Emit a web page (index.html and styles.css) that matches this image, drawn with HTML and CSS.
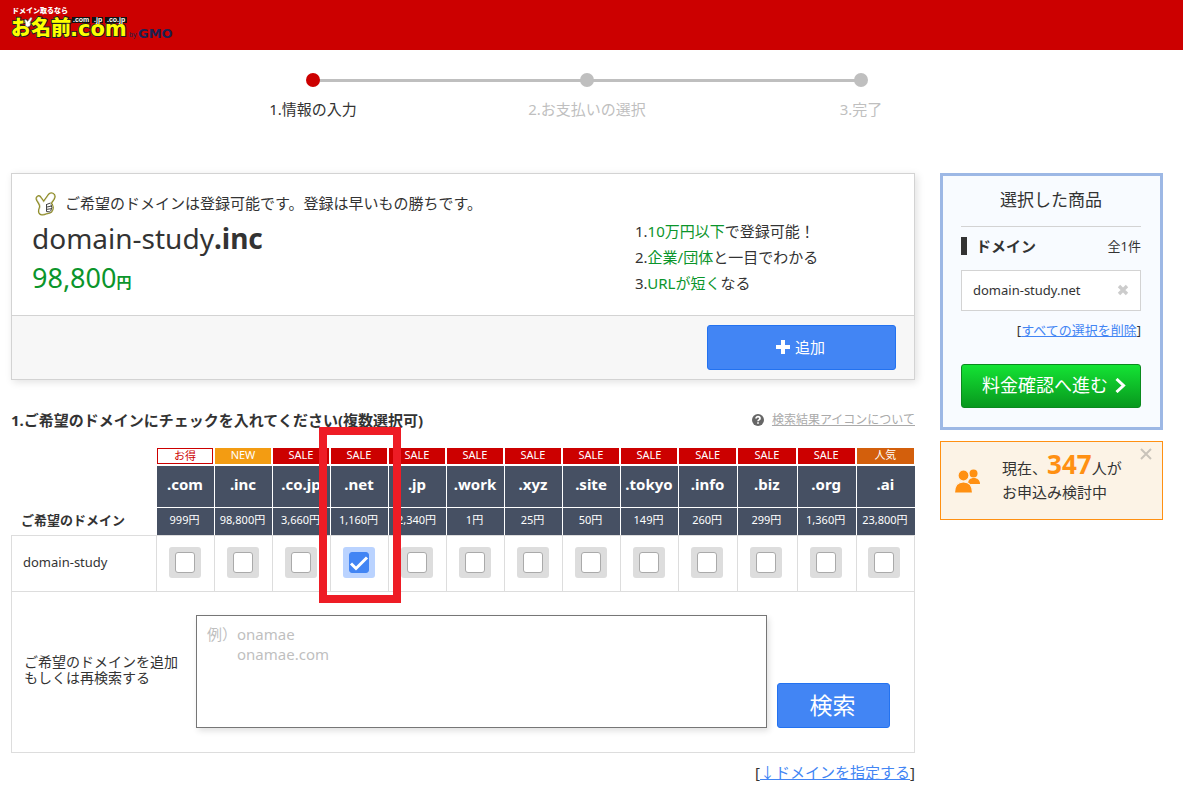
FILE: index.html
```html
<!DOCTYPE html>
<html lang="ja">
<head>
<meta charset="utf-8">
<meta name="viewport" content="width=device-width, initial-scale=1">
<title>お名前.com</title>
<link rel="stylesheet" href="styles.css">
</head>
<body>
<header class="site-header">
  <a class="logo" href="#" aria-label="お名前.com by GMO">
    <svg width="176" height="42" viewBox="0 0 176 42">
      <text class="logo-tag" x="12" y="13">ドメイン取るなら</text>
      <text class="logo-kanji" x="11" y="35">お名前</text>
      <text class="logo-com" x="70" y="36">.com</text>
      <path d="M72 17h18v6H72zM92 17h11v6H92zM105 17h22v6h-22z" fill="#111"/>
      <g class="logo-tld"><text x="73" y="22">.com</text><text x="94" y="22">.jp</text><text x="107" y="22">.co.jp</text></g>
      <path d="M24.500 20q1.500-1.500 3 1.500l3-4q2-.5 1.500 1.500L30 22.500q1.500 4-2.500 4.500-3-.5-2-4z" fill="#fff" stroke="#777" stroke-width=".6"/>
      <text class="logo-by" x="129" y="37">by</text>
      <text class="logo-gmo" x="138" y="38">GMO</text>
    </svg>
  </a>
</header>
<div class="page">
  <ol class="steps">
    <li class="step current">1.情報の入力</li>
    <li class="step">2.お支払いの選択</li>
    <li class="step">3.完了</li>
  </ol>
  <div class="columns">
    <main class="main">
      <section class="offer">
        <div class="offer-body">
          <div class="offer-name">
            <p class="offer-lead">
              <svg width="22" height="24" viewBox="0 0 22 24"><path d="M2.500 8C.8 5 4 3.500 5.500 6l3.200 4.500L14 3c2-2.500 6-1 5 2.500-.8 2.500-3 4-3.500 6 2.300 1.500 2.500 6 .5 8-1.500 1.500-3.500 1-5 1.500-2.500 1.500-6 1.500-6.500-1-.5-2 .8-3.500 1-5.500C5.500 12 3.500 10 2.500 8z" fill="#fff" stroke="#8f8c26" stroke-width="3" stroke-linejoin="round"/><path d="M2.500 8C.8 5 4 3.500 5.500 6l3.200 4.500L14 3c2-2.500 6-1 5 2.500-.8 2.500-3 4-3.500 6 2.300 1.500 2.500 6 .5 8-1.500 1.500-3.500 1-5 1.500-2.500 1.500-6 1.500-6.500-1-.5-2 .8-3.500 1-5.500C5.500 12 3.500 10 2.500 8z" fill="#fff" stroke="#eee" stroke-width=".5"/><path d="M11.500 12.500l4-1.500M12 15l4.500-1M12 17.300l4.500-.6M11.500 12v7.500l4 .5M16 12.500q1.800 3-.3 6.500" fill="none" stroke="#444" stroke-width="1"/></svg>
              <span>ご希望のドメインは登録可能です。登録は早いもの勝ちです。</span>
            </p>
            <h1 class="offer-domain">domain-study<b>.inc</b></h1>
            <p class="offer-price">98,800<b>円</b></p>
          </div>
          <ul class="offer-points">
            <li>1.<em>10万円以下</em>で登録可能！</li>
            <li>2.<em>企業/団体</em>と一目でわかる</li>
            <li>3.<em>URLが短く</em>なる</li>
          </ul>
        </div>
        <div class="offer-foot">
          <button class="button add" type="button"><svg width="14" height="14" viewBox="0 0 14 14"><path d="M5 0h4v5h5v4H9v5H5V9H0V5h5z" fill="#fff"/></svg>追加</button>
        </div>
      </section>

      <div class="section-head">
        <h2>1.ご希望のドメインにチェックを入れてください(複数選択可)</h2>
        <p class="help"><svg width="12" height="12" viewBox="0 0 12 12"><circle cx="6" cy="6" r="6" fill="#666"/><path d="M4 4.500C4 2 8 2 8 4.500 8 6 6 5.800 6 7.300M6 8.200v1.600" fill="none" stroke="#fff" stroke-width="1.700"/></svg><a href="#">検索結果アイコンについて</a></p>
      </div>

      <div class="picker">
        <table class="domains">
          <colgroup><col class="name-col"><col class="tld-col" span="9"><col span="4"></colgroup>
          <thead>
            <tr class="badges">
              <td></td>
              <td><span class="badge deal">お得</span></td>
              <td><span class="badge new">NEW</span></td>
              <td><span class="badge">SALE</span></td>
              <td class="marked"><span class="badge">SALE</span></td>
              <td><span class="badge">SALE</span></td>
              <td><span class="badge">SALE</span></td>
              <td><span class="badge">SALE</span></td>
              <td><span class="badge">SALE</span></td>
              <td><span class="badge">SALE</span></td>
              <td><span class="badge">SALE</span></td>
              <td><span class="badge">SALE</span></td>
              <td><span class="badge">SALE</span></td>
              <td><span class="badge hot">人気</span></td>
            </tr>
            <tr class="tlds">
              <th class="row-title" rowspan="2" scope="col">ご希望のドメイン</th>
              <th scope="col">.com</th><th scope="col">.inc</th><th scope="col">.co.jp</th><th scope="col">.net</th><th scope="col">.jp</th><th scope="col">.work</th><th scope="col">.xyz</th><th scope="col">.site</th><th scope="col">.tokyo</th><th scope="col">.info</th><th scope="col">.biz</th><th scope="col">.org</th><th scope="col">.ai</th>
            </tr>
            <tr class="prices">
              <td>999円</td><td>98,800円</td><td>3,660円</td><td>1,160円</td><td>2,340円</td><td>1円</td><td>25円</td><td>50円</td><td>149円</td><td>260円</td><td>299円</td><td>1,360円</td><td>23,800円</td>
            </tr>
          </thead>
          <tbody>
            <tr class="choices">
              <th scope="row">domain-study</th>
              <td><label class="pick"><input type="checkbox" aria-label="domain-study.com"></label></td>
              <td><label class="pick"><input type="checkbox" aria-label="domain-study.inc"></label></td>
              <td><label class="pick"><input type="checkbox" aria-label="domain-study.co.jp"></label></td>
              <td><label class="pick on"><input type="checkbox" aria-label="domain-study.net" checked><svg width="20" height="20" viewBox="0 0 20 20"><path d="M2 10.500l5 5L18 4.500" fill="none" stroke="#fff" stroke-width="3"/></svg></label></td>
              <td><label class="pick"><input type="checkbox" aria-label="domain-study.jp"></label></td>
              <td><label class="pick"><input type="checkbox" aria-label="domain-study.work"></label></td>
              <td><label class="pick"><input type="checkbox" aria-label="domain-study.xyz"></label></td>
              <td><label class="pick"><input type="checkbox" aria-label="domain-study.site"></label></td>
              <td><label class="pick"><input type="checkbox" aria-label="domain-study.tokyo"></label></td>
              <td><label class="pick"><input type="checkbox" aria-label="domain-study.info"></label></td>
              <td><label class="pick"><input type="checkbox" aria-label="domain-study.biz"></label></td>
              <td><label class="pick"><input type="checkbox" aria-label="domain-study.org"></label></td>
              <td><label class="pick"><input type="checkbox" aria-label="domain-study.ai"></label></td>
            </tr>
          </tbody>
        </table>
        <form class="search">
          <label for="names">ご希望のドメインを追加<br>もしくは再検索する</label>
          <textarea id="names" placeholder="例）onamae&#10;　　onamae.com"></textarea>
          <button class="button find" type="button">検索</button>
        </form>
      </div>
      <p class="specify">[<a href="#">↓ドメインを指定する</a>]</p>
    </main>

    <aside class="side">
      <section class="cart">
        <h2>選択した商品</h2>
        <div class="cart-group"><h3>ドメイン</h3><span>全1件</span></div>
        <div class="cart-item"><span>domain-study.net</span><button type="button" aria-label="削除"><svg width="12" height="12" viewBox="0 0 12 12"><path d="M2 2l8 8m0-8l-8 8" stroke="#ccc" stroke-width="3.400"/></svg></button></div>
        <p class="cart-clear">[<a href="#">すべての選択を削除</a>]</p>
        <button class="proceed" type="button">料金確認へ進む<svg width="11" height="15" viewBox="0 0 11 15"><path d="M1.500 1l7 6.500-7 6.500" fill="none" stroke="#fff" stroke-width="3"/></svg></button>
      </section>
      <section class="notice">
        <svg class="people" width="25" height="24" viewBox="0 0 25 24"><g fill="#ff9012"><circle cx="18.500" cy="4.500" r="4"/><path d="M13 15c0-4 2-6 6-6 3 0 6 2 6 6z"/></g><g fill="#ff9012" stroke="#fcf3e6" stroke-width="1.200"><circle cx="8.500" cy="6.500" r="5.500"/><path d="M-.6 24C-.5 16.500 2 13 8.500 13s9 3.500 9.100 11z"/></g></svg>
        <p>現在、<strong>347</strong>人が<br>お申込み検討中</p>
        <button type="button" aria-label="閉じる"><svg width="12" height="12" viewBox="0 0 12 12"><path d="M1 1l10 10m0-10L1 11" stroke="#c9c3ba" stroke-width="2"/></svg></button>
      </section>
    </aside>
  </div>
</div>
</body>
</html>
```
FILE: styles.css
```css
*, *::before, *::after { box-sizing: border-box; }
body, h1, h2, h3, p, ol, ul { margin: 0; padding: 0; }
ol, ul { list-style: none; }
body {
  background: #fff;
  color: #333;
  font: 13px/16px "Noto Sans", "Noto Sans CJK JP", sans-serif;
}
a { color: #4285f4; }
button { font: inherit; cursor: pointer; }
svg { flex: none; }

.site-header { height: 50px; background: #c00; }
.logo svg { display: block; }
.logo text { font-family: "Noto Sans CJK JP", sans-serif; font-weight: 900; }
.logo .logo-tag { font-size: 7px; fill: #fff; }
.logo .logo-tld text { font: bold 7px "Liberation Sans", sans-serif; fill: #fff; }
.logo .logo-kanji { font-size: 20px; }
.logo .logo-com { font: bold 21px "DejaVu Sans", sans-serif; }
.logo .logo-kanji, .logo .logo-com { fill: #ff0; stroke: #222; stroke-width: 2px; paint-order: stroke; }
.logo .logo-by { font: 7px "Liberation Sans", sans-serif; fill: #1c2050; }
.logo .logo-gmo { font: bold 13px "DejaVu Sans", sans-serif; fill: #1c2050; }

.page { padding: 0 20px 0 11px; }

.steps { display: flex; max-width: 822px; margin: 0 auto; padding-top: 23px; }
.step {
  position: relative;
  flex: 1;
  padding-top: 26px;
  color: #bfbfbf;
  font-size: 15px;
  line-height: 20px;
  text-align: center;
}
.step::before {
  content: "";
  position: absolute;
  top: 0;
  left: 50%;
  z-index: 1;
  width: 14px;
  height: 14px;
  margin-left: -7px;
  border-radius: 50%;
  background: #bfbfbf;
}
.step + .step::after {
  content: "";
  position: absolute;
  top: 6px;
  left: -50%;
  width: 100%;
  height: 3px;
  background: #bfbfbf;
}
.step.current { color: #333; }
.step.current::before { background: #c00; }

.columns { display: flex; align-items: flex-start; gap: 25px; padding-top: 54px; }
.main { flex: 1; min-width: 0; }
.side { flex: none; width: 223px; }

.offer { border: 1px solid #d3d3d3; box-shadow: 2px 2px 8px rgba(0, 0, 0, .12); }
.offer-body { display: flex; padding: 18px 20px 15px; border-bottom: 1px solid #d3d3d3; }
.offer-name { flex: 1; min-width: 0; }
.offer-lead { display: flex; gap: 8px; padding-left: 3px; font-size: 15px; line-height: 23px; }
.offer-domain { font-size: 28px; font-weight: 400; line-height: 44px; }
.offer-price { color: #0b952b; font-size: 27px; line-height: 35px; }
.offer-price b { font-size: 15px; }
.offer-points { flex: none; width: 259px; padding-top: 26px; font-size: 15px; line-height: 26px; }
.offer-points em { color: #0b952b; font-style: normal; }
.offer-foot { display: flex; justify-content: flex-end; padding: 9px 18px; background: #f7f7f7; }
.button {
  display: flex;
  align-items: center;
  justify-content: center;
  gap: 5px;
  height: 45px;
  padding: 0 8px 2px 6px;
  border: 1px solid #2372f0;
  border-radius: 3px;
  background: #4285f4;
  color: #fff;
}
.add { width: 189px; font-size: 15px; }
.find { width: 113px; font-size: 23px; }

.section-head { display: flex; align-items: center; justify-content: space-between; padding: 30px 0 18px; }
.section-head h2 { font-size: 15px; line-height: 20px; }
.help { display: flex; align-items: center; gap: 8px; font-size: 12px; }
.help a { color: #aaa; }

.picker { border-bottom: 1px solid #ddd; }
.domains { width: 100%; border-spacing: 0; table-layout: fixed; }
.domains td, .domains th { padding: 0; text-align: center; }
.name-col { width: 145px; }
.tld-col { width: 58px; }
.badges td { padding: 0 1px 2px; }
.badge { display: block; height: 16px; background: #c00; color: #fff; font-size: 11px; line-height: 14px; }
.badge.deal { border: 1px solid #c00; background: #fff; color: #c00; }
.badge.new { background: #f39c12; }
.badge.hot { background: #d35f0c; }
.marked { position: relative; }
.marked::after {
  content: "";
  position: absolute;
  top: -21px;
  left: -11px;
  z-index: 1;
  width: 82px;
  height: 176px;
  border: 8px solid #ee1c25;
}
.domains .tlds th { height: 42px; padding: 0 1px 6px 0; border-bottom: 1px solid #fff; border-left: 1px solid #fff; background: #465063; color: #fff; font-size: 15px; }
.domains .tlds .row-title { padding: 0 0 7px 10px; border: 0; background: none; color: #333; font-size: 13px; text-align: left; vertical-align: bottom; }
.domains .prices td { height: 27px; padding: 0 2px 4px 0; border-left: 1px solid #fff; background: #465063; color: #fff; font-size: 11px; }
.choices td, .choices th { height: 57px; border: solid #ddd; border-width: 1px 0 1px 1px; }
.choices td:last-child { border-right-width: 1px; }
.domains .choices td { padding: 0 2px 2px 0; }
.domains .choices th { padding: 0 0 4px 11px; font-weight: 400; text-align: left; }
.pick { display: grid; place-items: center; width: 32px; height: 31px; margin: 0 auto; border-radius: 3px; background: #ddd; }
.pick input, .pick svg { grid-area: 1 / 1; }
.pick input { appearance: none; width: 20px; height: 21px; margin: 0; border: 1px solid #aaa; border-radius: 3px; background: #fff; }
.pick.on { background: #bad3ff; }
.pick.on input { border-color: #4285f4; background: #4285f4; }
.pick svg { pointer-events: none; }

.search { display: flex; align-items: flex-end; padding: 23px 24px 24px 12px; border: solid #ddd; border-width: 0 1px; }
.search label { flex: none; align-self: center; width: 172px; padding-bottom: 4px; font-size: 14px; }
.search textarea {
  flex: 1;
  min-width: 0;
  height: 113px;
  margin-right: 10px;
  padding: 8px 10px;
  border: 1px solid #767676;
  box-shadow: 2px 3px 6px rgba(0, 0, 0, .12);
  font: inherit;
  font-size: 15px;
  line-height: 20px;
  resize: none;
}
.search textarea::placeholder { color: #bfbfbf; }
.specify { padding-top: 9px; font-size: 15px; line-height: 20px; text-align: right; }

.cart { padding: 13px 19px 19px 18px; border: 3px solid #9db8e5; background: #f8fbff; }
.cart h2 { padding-bottom: 15px; border-bottom: 1px solid #d3d3d3; font-size: 17px; font-weight: 400; line-height: 22px; text-align: center; }
.cart-group { display: flex; align-items: center; justify-content: space-between; padding: 10px 0 15px; }
.cart-group h3 { padding-left: 9px; border-left: 6px solid #333; font-size: 15px; line-height: 18px; }
.cart-item { display: flex; align-items: center; justify-content: space-between; height: 41px; padding: 0 11px 2px; border: 1px solid #d3d3d3; background: #fff; }
.cart-item button, .notice button { display: block; padding: 0; border: 0; background: none; line-height: 0; }
.cart-clear { padding: 11px 0 26px; text-align: right; }
.proceed {
  display: flex;
  align-items: center;
  justify-content: center;
  gap: 7px;
  width: 100%;
  height: 44px;
  padding: 0 0 2px 6px;
  border: 1px solid #0a8a1e;
  border-radius: 3px;
  background: linear-gradient(#14e334, #08981e);
  color: #fff;
  font-size: 18px;
}
.notice { position: relative; display: flex; align-items: center; gap: 22px; height: 79px; margin-top: 11px; padding: 0 14px; border: 1px solid #ff9012; background: #fcf3e6; }
.notice p { padding-bottom: 6px; font-size: 15px; line-height: 24px; }
.notice strong { color: #ff9012; font-size: 26px; }
.notice button { position: absolute; top: 6px; right: 10px; }
```
